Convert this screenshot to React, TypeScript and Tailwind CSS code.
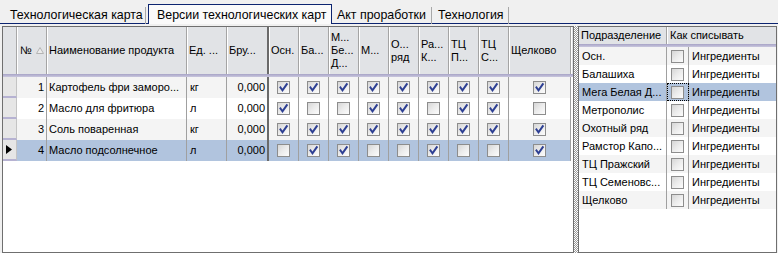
import React from "react";

const NAVY = "border-[#0c2470]";

function Check({ checked }: { checked: boolean }) {
  return (
    <div className="w-[13px] h-[13px] border border-[#8d8d8d] bg-gradient-to-br from-[#d6d6d6] via-[#ececec] to-[#fcfcfc] flex items-center justify-center">
      {checked && (
        <svg width="11" height="11" viewBox="0 0 11 11">
          <polyline points="2.5,5.5 4.5,8.3 8.8,2.2" fill="none" stroke="#2d3f93" strokeWidth="2" strokeLinecap="square" />
        </svg>
      )}
    </div>
  );
}

type Col = { w: string; label: string[]; kind: "num" | "text" | "unit" | "qty" | "check"; thick?: boolean; sort?: boolean };

const cols: Col[] = [
  { w: "w-[30px]", label: ["№"], kind: "num", sort: true },
  { w: "w-[140px]", label: ["Наименование продукта"], kind: "text" },
  { w: "w-[40px]", label: ["Ед. ..."], kind: "unit" },
  { w: "w-[42px]", label: ["Бру..."], kind: "qty", thick: true },
  { w: "w-[30px]", label: ["Осн."], kind: "check" },
  { w: "w-[30px]", label: ["Ба..."], kind: "check" },
  { w: "w-[30px]", label: ["М...", "Бе...", "Д..."], kind: "check" },
  { w: "w-[30px]", label: ["М..."], kind: "check" },
  { w: "w-[30px]", label: ["О...", "ряд"], kind: "check" },
  { w: "w-[30px]", label: ["Ра...", "К..."], kind: "check" },
  { w: "w-[30px]", label: ["ТЦ", "П..."], kind: "check" },
  { w: "w-[30px]", label: ["ТЦ", "С..."], kind: "check" },
  { w: "w-[62px]", label: ["Щелково"], kind: "check" },
];

const rows = [
  { n: "1", name: "Картофель фри заморо...", unit: "кг", qty: "0,000", checks: [1, 1, 1, 1, 1, 1, 1, 1, 1] },
  { n: "2", name: "Масло для фритюра", unit: "л", qty: "0,000", checks: [1, 0, 0, 1, 1, 0, 1, 1, 0] },
  { n: "3", name: "Соль поваренная", unit: "кг", qty: "0,000", checks: [1, 1, 1, 1, 1, 1, 1, 1, 1] },
  { n: "4", name: "Масло подсолнечное", unit: "л", qty: "0,000", checks: [0, 1, 1, 0, 0, 1, 0, 0, 1] },
];

const deps = [
  "Осн.",
  "Балашиха",
  "Мега Белая Д...",
  "Метрополис",
  "Охотный ряд",
  "Рамстор Капо...",
  "ТЦ Пражский",
  "ТЦ Семеновс...",
  "Щелково",
];

function SortGlyph() {
  return (
    <svg width="8" height="7" viewBox="0 0 8 7" className="ml-[4px]">
      <polygon points="4,0.5 7.5,6.5 0.5,6.5" fill="#ececec" stroke="#b4b4b4" strokeWidth="1" />
    </svg>
  );
}

function Lavender() {
  return <div className="h-[3px] bg-gradient-to-b from-[#a7a3c6] to-[#c9c7de]" />;
}

export default function App() {
  return (
    <div className="w-[778px] h-[253px] overflow-hidden bg-[#f0f0f0] text-black text-[11px] font-['Liberation_Sans',Arial,sans-serif]">
      {/* Tabs */}
      <div className="flex h-[24px] items-end text-[12.4px]">
        <div className={`w-[146px] h-[20px] border-b ${NAVY} flex items-center pl-[10px] pt-[3px] justify-between`}>
          <span>Технологическая карта</span>
          <div className="w-px h-[17px] bg-[#a8a8a8]" />
        </div>
        <div className={`w-[2px] h-[20px] border-b ${NAVY}`} />
        <div className={`w-[184px] h-[20px] border-t border-l border-r ${NAVY} bg-[#fafafa] flex items-center pl-[8px] pt-[2px]`}>
          <span>Версии технологических карт</span>
        </div>
        <div className={`w-[100px] h-[20px] border-b ${NAVY} flex items-center pl-[5px] pt-[3px] justify-between`}>
          <span>Акт проработки</span>
          <div className="w-px h-[17px] bg-[#a8a8a8]" />
        </div>
        <div className={`w-[77px] h-[20px] border-b ${NAVY} flex items-center pl-[6px] pt-[3px] justify-between`}>
          <span>Технология</span>
          <div className="w-px h-[17px] bg-[#a8a8a8]" />
        </div>
        <div className={`flex-1 h-[20px] border-b ${NAVY}`} />
      </div>

      {/* Main */}
      <div className="flex pl-[2px] pt-[2px]">
        {/* Left grid */}
        <div className="w-[572px] h-[227px] border border-[#6f6f6f] bg-white flex flex-col">
          <div className="flex h-[47px] bg-[#e1e3e6]">
            <div className="w-[14px] border-r border-[#a8a8a8]" />
            {cols.map((c, i) => (
              <div
                key={i}
                className={`${c.w} ${c.thick ? "border-r-2 border-[#6a6a6a]" : "border-r border-[#a4a4a4]"} shadow-[inset_1px_0_0_#ffffff] flex flex-col justify-center pl-[2px] leading-[13px] whitespace-nowrap overflow-hidden`}
              >
                {c.sort ? (
                  <div className="flex items-center pl-[1px]">
                    <span>№</span>
                    <SortGlyph />
                  </div>
                ) : (
                  c.label.map((l, j) => <span key={j}>{l}</span>)
                )}
              </div>
            ))}
            <div className="flex-1 shadow-[inset_1px_0_0_#ffffff]" />
          </div>
          <Lavender />
          {rows.map((r, ri) => {
            const sel = ri === 3;
            const bg = sel ? "bg-[#b1c4de]" : ri % 2 === 0 ? "bg-[#f4f4f4]" : "bg-white";
            let ci = 0;
            return (
              <div key={ri} className="flex h-[21px]">
                <div className="w-[14px] bg-[#e6e6e6] border-r border-[#c4c4c4] border-b-2 border-b-[#b6b2d2] flex items-center pl-[3px]">
                  {sel && (
                    <svg width="6" height="9" viewBox="0 0 6 9">
                      <polygon points="0,0 6,4.5 0,9" fill="#000" />
                    </svg>
                  )}
                </div>
                {cols.map((c, i) => {
                  const border = c.thick ? "border-r-2 border-[#6a6a6a]" : "border-r border-[#a0a0a0]";
                  const base = `${c.w} ${border} ${bg} flex items-center whitespace-nowrap overflow-hidden`;
                  if (c.kind === "num") return <div key={i} className={`${base} justify-end pr-[2px]`}>{r.n}</div>;
                  if (c.kind === "text") return <div key={i} className={`${base} pl-[2px]`}>{r.name}</div>;
                  if (c.kind === "unit") return <div key={i} className={`${base} pl-[3px]`}>{r.unit}</div>;
                  if (c.kind === "qty") return <div key={i} className={`${base} justify-end pr-[2px]`}>{r.qty}</div>;
                  const v = r.checks[ci++];
                  return (
                    <div key={i} className={`${base} justify-center`}>
                      <Check checked={v === 1} />
                    </div>
                  );
                })}
                <div className="flex-1 bg-white" />
              </div>
            );
          })}
          <div className="flex-1" />
        </div>

        {/* Splitter */}
        <div className="w-[4px] h-[227px] bg-[repeating-conic-gradient(#9a9a9a_0_25%,#ffffff_0_50%)] bg-[length:2px_2px]" />

        {/* Right grid */}
        <div className="w-[199px] h-[227px] border border-[#6f6f6f] bg-white flex flex-col">
          <div className="flex h-[17px] bg-[#e1e3e6]">
            <div className="w-[88px] border-r border-[#a4a4a4] flex items-center pl-[2px] whitespace-nowrap">Подразделение</div>
            <div className="flex-1 shadow-[inset_1px_0_0_#ffffff] flex items-center pl-[3px] whitespace-nowrap">Как списывать</div>
          </div>
          <Lavender />
          {deps.map((d, i) => {
            const sel = i === 2;
            const bg = sel ? "bg-[#b1c4de]" : i % 2 === 0 ? "bg-[#f4f4f4]" : "bg-white";
            return (
              <div key={i} className={`flex h-[18px] ${bg}`}>
                <div className="w-[88px] border-r border-[#a0a0a0] flex items-center pl-[3px] whitespace-nowrap overflow-hidden">{d}</div>
                <div className={`w-[22px] border-r border-[#a0a0a0] flex items-center justify-center ${sel ? "outline outline-1 outline-dotted outline-black -outline-offset-1" : ""}`}>
                  <Check checked={false} />
                </div>
                <div className="flex-1 flex items-center pl-[3px] whitespace-nowrap">Ингредиенты</div>
              </div>
            );
          })}
          <div className="flex-1" />
        </div>
      </div>
    </div>
  );
}
